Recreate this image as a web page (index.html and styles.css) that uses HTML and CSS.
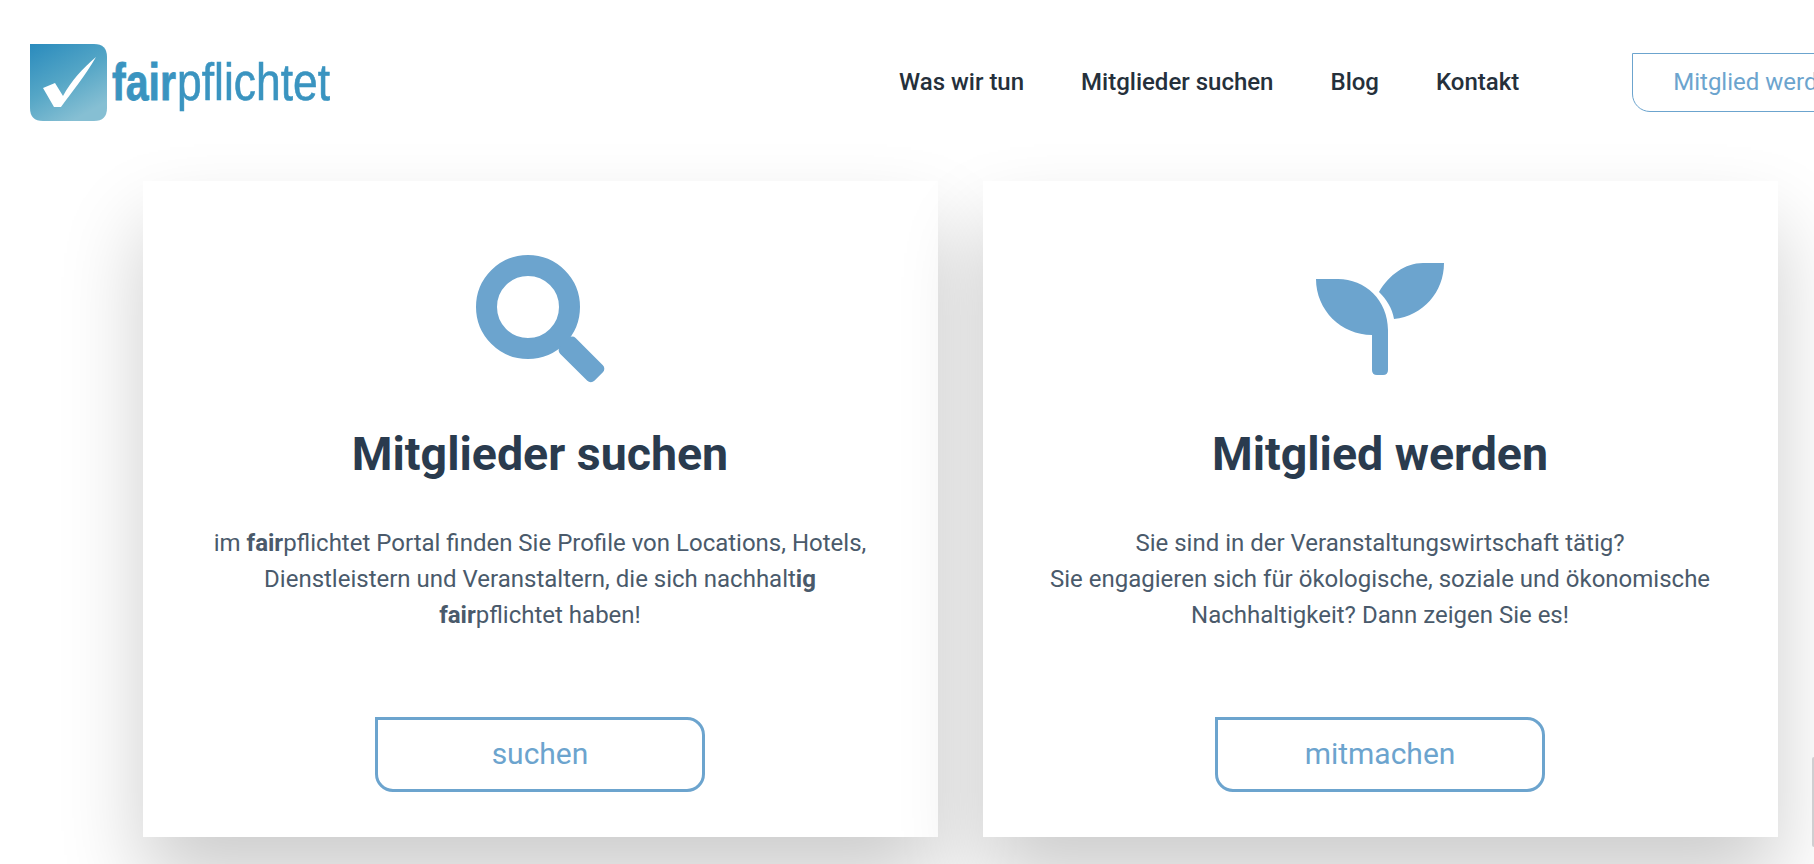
FILE: index.html
```html
<!DOCTYPE html>
<html lang="de">
<head>
    <meta charset="UTF-8">
    <title>fairpflichtet</title>
    <link rel="stylesheet" href="styles.css">
</head>
<body>
    <header class="site-header">
        <a class="logo" href="#">
            <svg class="logo-svg" width="310" height="88" viewBox="0 0 310 88">
                <defs>
                    <linearGradient id="logoFill" x1="0" y1="0" x2="0.55" y2="1">
                        <stop offset="0" stop-color="#2a8bbd"/>
                        <stop offset="0.55" stop-color="#55a6c6"/>
                        <stop offset="1" stop-color="#86bfd3"/>
                    </linearGradient>
                </defs>
                <path d="M0 0H64Q77 0 77 13V64Q77 77 64 77H13Q0 77 0 64Z" fill="url(#logoFill)"/>
                <path d="M13 44L25 39L33 52C41 37 53 24 66 13C55 32 42 48 31 63H24Z" fill="#fff"/>
                <text class="logo-text logo-bold" transform="translate(82 56) scale(0.79 1)">fair</text>
                <text class="logo-text logo-thin" transform="translate(147 56) scale(0.854 1)">pflichtet</text>
            </svg>
        </a>
        <nav class="main-nav">
            <a href="#">Was wir tun</a>
            <a href="#">Mitglieder suchen</a>
            <a href="#">Blog</a>
            <a href="#">Kontakt</a>
        </nav>
        <a class="header-btn" href="#">Mitglied werden</a>
    </header>

    <main class="cards">
        <section class="card">
            <svg class="card-icon" width="130" height="130" viewBox="0 0 130 130">
                <circle cx="53" cy="57" r="41.5" fill="none" stroke="#6ca4ce" stroke-width="21"/>
                <rect x="82" y="99" width="48.5" height="22" rx="5" fill="#6ca4ce" transform="rotate(45 107 110)"/>
            </svg>
            <h2>Mitglieder suchen</h2>
            <p>im <b>fair</b>pflichtet Portal finden Sie Profile von Locations, Hotels,<br>Dienstleistern und Veranstaltern, die sich nachhalt<b>ig</b><br><b>fair</b>pflichtet haben!</p>
            <a class="card-btn" href="#">suchen</a>
        </section>
        <section class="card">
            <svg class="card-icon" width="130" height="130" viewBox="0 0 130 130">
                <path d="M1 29H23C50 29 73 50 73 80V120Q73 125 68 125H62Q57 125 57 120V85C26 85 1 60 1 29Z" fill="#6ca4ce"/>
                <path d="M129 13H108C90 13 74 25 64 42C72 50 77 58 79 69C108 66 129 42 129 13Z" fill="#6ca4ce"/>
            </svg>
            <h2>Mitglied werden</h2>
            <p>Sie sind in der Veranstaltungswirtschaft tätig?<br>Sie engagieren sich für ökologische, soziale und ökonomische<br>Nachhaltigkeit? Dann zeigen Sie es!</p>
            <a class="card-btn" href="#">mitmachen</a>
        </section>
    </main>

    <div class="edge-widget"></div>
</body>
</html>
```

FILE: styles.css
```css
html, body {
  margin: 0;
  height: 864px;
  overflow: hidden;
  background-color: #fff;
}

body {
  font-family: Roboto, "Liberation Sans", sans-serif;
}

a {
  text-decoration: none;
}

.site-header {
  display: flex;
  align-items: flex-start;
  width: 1900px;
  height: 181px;
  box-sizing: border-box;
  padding: 44px 0 0 30px;
}

.logo {
  display: block;
  width: 310px;
  height: 88px;
}

.logo-svg {
  display: block;
}

.logo-text {
  font-family: "Liberation Sans", sans-serif;
  font-size: 52px;
  fill: #3a94c0;
}

.logo-bold {
  font-weight: 700;
  stroke: #3a94c0;
  stroke-width: 0.8px;
}

.logo-thin {
  stroke: #3a94c0;
  stroke-width: 0.6px;
}

.main-nav {
  display: flex;
  gap: 57px;
  margin-left: 559px;
  padding-top: 23px;
  font-size: 24px;
  font-weight: 500;
  line-height: 30px;
}

.main-nav a {
  color: #25303b;
}

.header-btn {
  margin: 9px 0 0 113px;
  padding: 0 40px;
  height: 59px;
  box-sizing: border-box;
  line-height: 57px;
  border: 1px solid #6ca4ce;
  border-radius: 0 18px 18px 18px;
  color: #6ca4ce;
  font-size: 24px;
  white-space: nowrap;
}

.cards {
  display: flex;
  gap: 45px;
  padding-left: 143px;
}

.card {
  width: 795px;
  height: 656px;
  box-sizing: border-box;
  padding: 69px 1px 0 0;
  background-color: #fff;
  box-shadow: 0 45px 78px rgba(0, 0, 0, 0.2);
  display: flex;
  flex-direction: column;
  align-items: center;
  text-align: center;
}

.card-icon {
  display: block;
  flex: none;
  overflow: visible;
}

.card h2 {
  margin: 47px 0 0;
  font-size: 46.5px;
  line-height: 54px;
  font-weight: 700;
  color: #2a3b4e;
}

.card p {
  margin: 44px 0 0;
  font-size: 24px;
  line-height: 36px;
  color: #4a5a6b;
}

.card p b {
  font-weight: 700;
}

.card-btn {
  display: block;
  box-sizing: border-box;
  width: 330px;
  height: 75px;
  margin-top: 84px;
  border: 3px solid #6ca4ce;
  border-radius: 0 18px 18px 18px;
  color: #6ca4ce;
  font-size: 30px;
  line-height: 67px;
}

/* sliver of a widget cut off by the right edge */
.edge-widget {
  position: absolute;
  top: 757px;
  right: 0;
  width: 2px;
  height: 90px;
  border-radius: 2px 0 0 2px;
  background-color: #cfcfd1;
}
```
